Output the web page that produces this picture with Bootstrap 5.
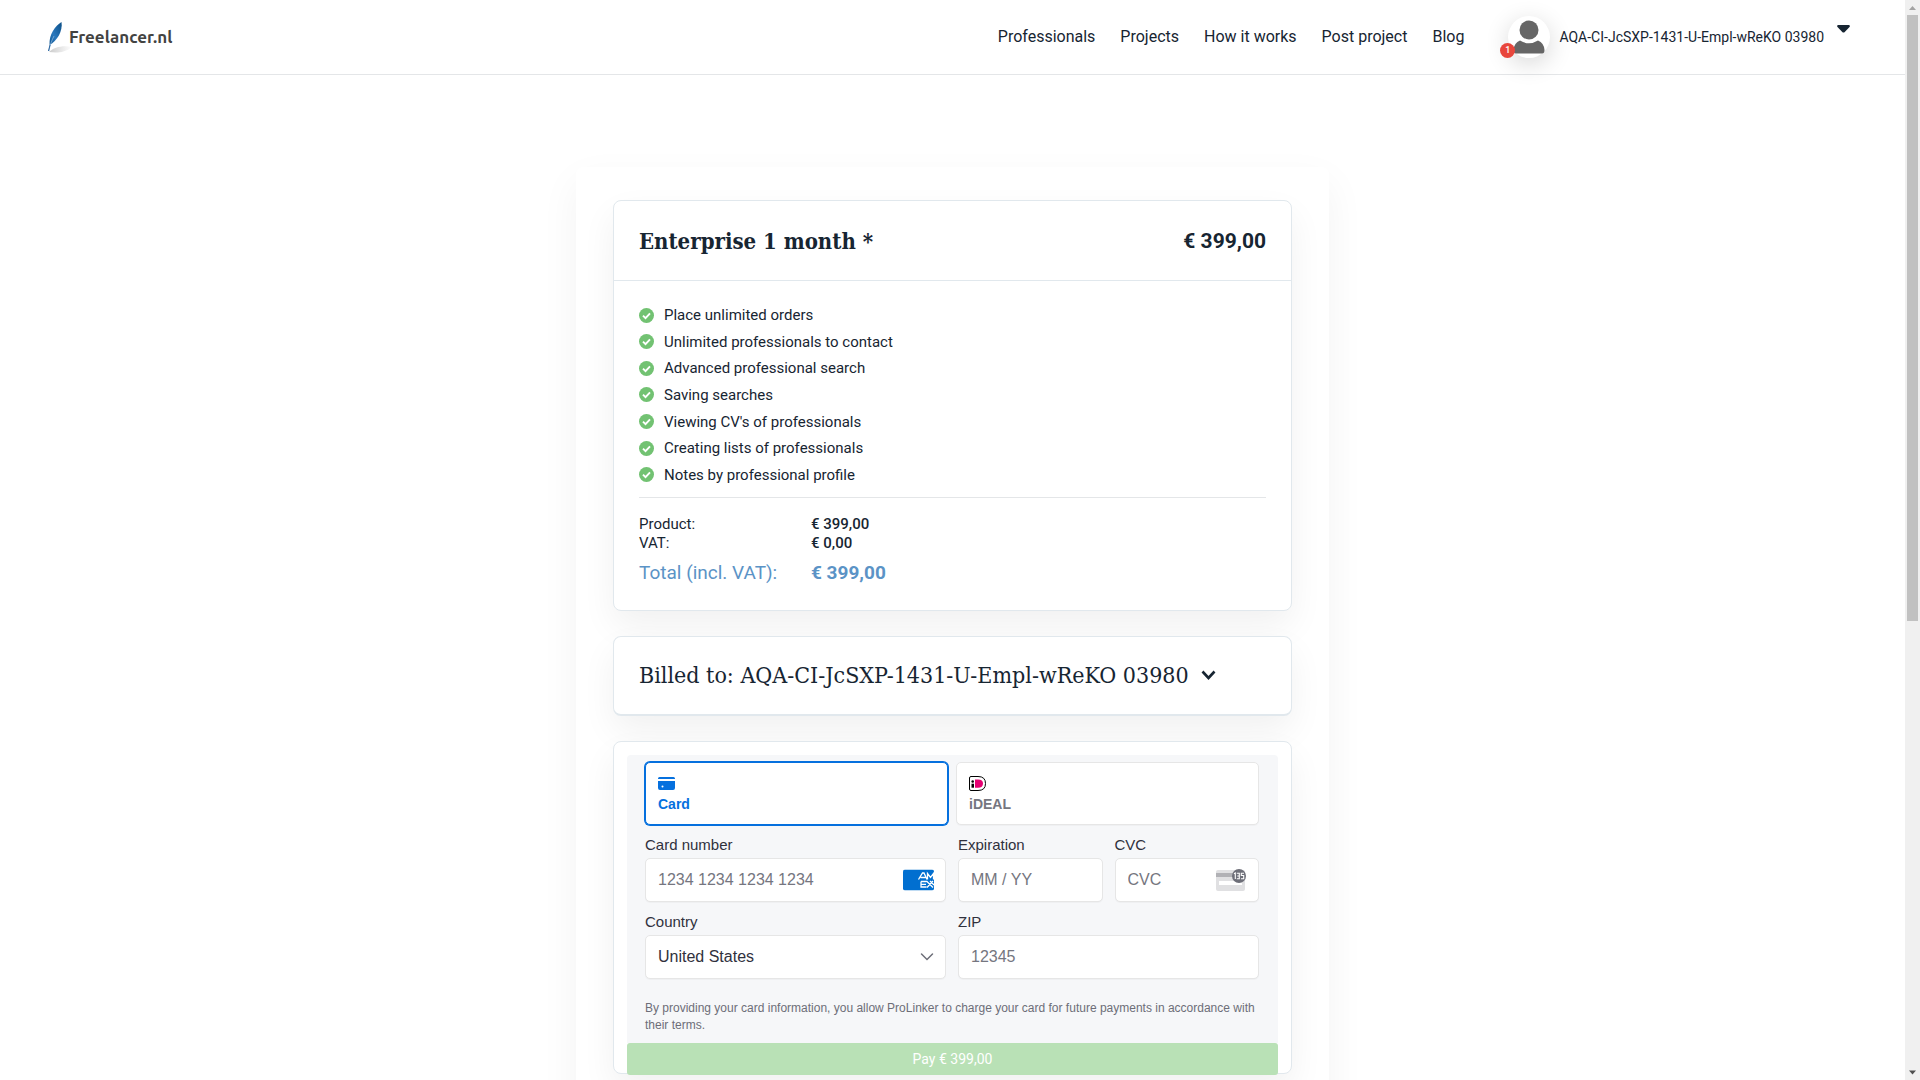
<!DOCTYPE html>
<html lang="en">
<head>
<meta charset="utf-8">
<meta name="viewport" content="width=device-width, initial-scale=1">
<title>Freelancer.nl</title>
<link href="https://cdn.jsdelivr.net/npm/bootstrap@5.3.0/dist/css/bootstrap.min.css" rel="stylesheet">
<style>
:root{--ink:#172532;--line:#e1e8ed;--muted-pay:#757680;--pay-blue:#0570de}
body{font-family:Roboto,"Liberation Sans",sans-serif;font-size:15px;color:var(--ink);background:#fff}
.site-head{height:75px;padding:0 48px;border-bottom:1px solid #e4e6e8}
.brand-link{color:#434342;font:600 17px/24px Ubuntu,"Noto Sans",sans-serif;text-decoration:none;gap:6px}
.main-nav{gap:25px;margin-right:44px}
.main-nav .nav-link{color:var(--ink);font-size:16px;line-height:24px;padding:0}
.user-link{color:var(--ink);gap:9px;text-decoration:none;font-size:14px;line-height:20px}
.avatar{width:42px;height:42px;background:#fff;box-shadow:0 6px 24px rgba(0,0,0,.16)}
.count-dot{left:-8px;bottom:0;width:15px;height:15px;font-size:9px;font-weight:500;line-height:15px;background:#e8463c;color:#fff}
.user-caret{margin:0 7px 16px 4px}
.checkout{width:100%;max-width:753px;margin-top:92px;padding:33px 37px 80px;border-radius:8px;box-shadow:0 15px 40px rgba(0,0,0,.05)}
.box{background:#fff;border:1px solid var(--line);border-radius:8px;box-shadow:0 15px 35px rgba(0,0,0,.06);margin-bottom:25px}
.slab{font-family:"Roboto Slab","DejaVu Serif Condensed","DejaVu Serif",serif;margin:0}
.plan-head{height:80px;padding:0 25px;border-bottom:1px solid var(--line)}
.plan-head h1{font-size:22px;font-weight:700;line-height:32px}
.plan-price{font-size:21px;font-weight:700;line-height:32px}
.plan-body{padding:23px 25px 23px}
.perks{height:182px;margin:0}
.perks li{gap:10px;line-height:22px}
.totals{margin-top:11px;padding-top:17px;border-top:1px solid #e4e6e8;line-height:19px}
.totals dt,.totals dd{margin:0}
.totals dt{width:172px;font-weight:400}
.totals dd{font-weight:500}
.totals .sum{font-size:19px;line-height:28px;color:#5b93c6;margin-top:6px}
.totals .sum dd{font-weight:700}
.billed{height:80px;padding:0 25px 2px;border-bottom-width:2px;gap:12px;width:100%;color:var(--ink);text-align:left}
.billed h2{font-size:23px;line-height:32px;font-weight:400}
.pay-box{padding:13px 13px 0;height:333px}
.pay-panel{background:#f6f7f9;border-radius:4px 4px 0 0;padding:7px 19px 0 18px;height:288px;font-family:"Liberation Sans",sans-serif;color:#30313d}
.tiles{gap:8px;margin-bottom:10px}
.method{flex:1 1 0;height:63px;padding:12px 12px 0;background:#fff;border:1px solid #e6e6e6;border-radius:5px;box-shadow:0 1px 1px rgba(0,0,0,.03);font-size:14px;font-weight:700;line-height:20px;color:var(--muted-pay)}
.method.chosen{color:var(--pay-blue);border-color:var(--pay-blue);box-shadow:0 0 0 1px var(--pay-blue)}
.method svg{margin-bottom:2px}
.fields{display:grid;grid-template-columns:repeat(4,minmax(0,1fr));column-gap:12px;row-gap:10px}
.wide{grid-column:span 2}
.fields label{display:block;font-size:15px;line-height:20px;margin-bottom:3px}
.fields .form-control,.fields .form-select{height:44px;padding:0 12px;border:1px solid #e6e6e6;border-radius:5px;font-size:16px;color:#30313d;box-shadow:0 1px 1px rgba(0,0,0,.03)}
.fields .form-select{background-image:none}
.fields .form-control::placeholder{color:var(--muted-pay);opacity:1}
.in-icon{position:absolute;right:12px;top:50%;transform:translateY(-50%);pointer-events:none}
.terms{font-size:12px;line-height:17px;color:#6d6e78;margin:21px 0 0}
.pay-btn{width:100%;height:32px;padding:0;border:0;border-radius:3px;background:#b9e1b6;color:#fff;font-size:14px;line-height:32px}
.pay-btn:disabled{background:#b9e1b6;color:#fff;opacity:1}
.scroll-rail{width:15px;background:#f0f0f0}
.scroll-thumb{width:11px;height:606px;background:#c1c1c1}
</style>
<script src="https://cdn.jsdelivr.net/npm/bootstrap@5.3.0/dist/js/bootstrap.bundle.min.js"></script>
</head>
<body>
<svg width="0" height="0" class="position-absolute" aria-hidden="true">
  <symbol id="tick" viewBox="0 0 15 15"><circle cx="7.500" cy="7.500" r="7.500" fill="#72c272"/><path d="M4 7.700l2.500 2.500L11 5.400" fill="none" stroke="#fff" stroke-width="1.900"/></symbol>
</svg>
<div class="d-flex vh-100 overflow-hidden">
  <div class="flex-grow-1 overflow-hidden">
    <header class="site-head d-flex align-items-center justify-content-between">
      <a class="brand-link d-flex align-items-center" href="#">
        <svg width="15" height="31" viewBox="0 0 15 31" overflow="visible" aria-hidden="true">
          <defs><linearGradient id="quill" x1="1" y1="0" x2="0" y2="1"><stop offset="0" stop-color="#0b4e86"/><stop offset=".6" stop-color="#2a78bd"/><stop offset="1" stop-color="#0f5691"/></linearGradient>
          <linearGradient id="shade"><stop offset="0" stop-color="#ccc"/><stop offset="1" stop-color="#fff"/></linearGradient></defs>
          <path d="M1 30C6 25 15 23 24 25C17 31 8 31 1 30Z" fill="url(#shade)"/>
          <path d="M13.500 0C7 4 1 12 1.500 23C9 19 15 9 13.500 0Z" fill="url(#quill)"/>
          <path d="M6 14C4 18 2 23 .8 29" fill="none" stroke="#86b3da" stroke-width=".8"/>
          <path d="M2 23L.5 29" stroke="#27619b"/>
        </svg>
        <span>Freelancer.nl</span>
      </a>
      <div class="d-flex align-items-center">
        <nav class="main-nav nav flex-nowrap">
          <a class="nav-link" href="#">Professionals</a>
          <a class="nav-link" href="#">Projects</a>
          <a class="nav-link" href="#">How it works</a>
          <a class="nav-link" href="#">Post project</a>
          <a class="nav-link" href="#">Blog</a>
        </nav>
        <a class="user-link d-flex align-items-center" href="#">
          <span class="avatar rounded-circle position-relative">
            <svg class="d-block" width="42" height="42" viewBox="0 0 42 42" aria-hidden="true"><circle cx="21" cy="14" r="9.500" fill="#666"/><path d="M12 24.500Q21 30 30 24.500Q36 27 36.500 34Q36.500 37.500 34 37.500H8Q5.500 37.500 5.500 34Q6 27 12 24.500Z" fill="#666"/></svg>
            <span class="count-dot rounded-circle position-absolute text-center">1</span>
          </span>
          <span>AQA-CI-JcSXP-1431-U-Empl-wReKO 03980</span>
          <svg class="user-caret" width="13" height="8" viewBox="0 0 13 8" aria-hidden="true"><path d="M1 0H12Q13.500 .5 12.500 2L7.500 7.200Q6.500 8 5.500 7.200L.5 2Q-.5 .5 1 0Z" fill="#172532"/></svg>
        </a>
      </div>
    </header>

    <main class="checkout mx-auto">
      <section class="box">
        <div class="plan-head d-flex align-items-center justify-content-between">
          <h1 class="slab">Enterprise 1 month *</h1>
          <div class="plan-price">€ 399,00</div>
        </div>
        <div class="plan-body">
          <ul class="perks list-unstyled d-flex flex-column justify-content-between">
            <li class="d-flex align-items-center"><svg width="15" height="15"><use href="#tick"/></svg>Place unlimited orders</li>
            <li class="d-flex align-items-center"><svg width="15" height="15"><use href="#tick"/></svg>Unlimited professionals to contact</li>
            <li class="d-flex align-items-center"><svg width="15" height="15"><use href="#tick"/></svg>Advanced professional search</li>
            <li class="d-flex align-items-center"><svg width="15" height="15"><use href="#tick"/></svg>Saving searches</li>
            <li class="d-flex align-items-center"><svg width="15" height="15"><use href="#tick"/></svg>Viewing CV's of professionals</li>
            <li class="d-flex align-items-center"><svg width="15" height="15"><use href="#tick"/></svg>Creating lists of professionals</li>
            <li class="d-flex align-items-center"><svg width="15" height="15"><use href="#tick"/></svg>Notes by professional profile</li>
          </ul>
          <dl class="totals mb-0">
            <div class="d-flex"><dt>Product:</dt><dd>€ 399,00</dd></div>
            <div class="d-flex"><dt>VAT:</dt><dd>€ 0,00</dd></div>
            <div class="d-flex sum"><dt>Total (incl. VAT):</dt><dd>€ 399,00</dd></div>
          </dl>
        </div>
      </section>

      <button class="box billed d-flex align-items-center" type="button">
        <h2 class="slab">Billed to: AQA-CI-JcSXP-1431-U-Empl-wReKO 03980</h2>
        <svg width="15" height="10" viewBox="0 0 15 10" aria-hidden="true"><path d="M1.500 1.500L7.500 8L13.500 1.500" fill="none" stroke="#172532" stroke-width="2.600"/></svg>
      </button>

      <form class="box pay-box">
        <div class="pay-panel">
          <div class="tiles d-flex">
            <button class="method chosen d-flex flex-column align-items-start justify-content-start" type="button">
              <svg width="17" height="17" viewBox="0 0 17 17" aria-hidden="true"><path d="M0 4V3.500Q0 2 1.500 2H15.500Q17 2 17 3.500V4ZM0 6H17V13Q17 15 15 15H2Q0 15 0 13ZM4.500 10.500a1 1 0 0 0 0 2a1 1 0 0 0 0-2Z" fill="#0570de" fill-rule="evenodd"/></svg>
              Card
            </button>
            <button class="method d-flex flex-column align-items-start justify-content-start" type="button">
              <svg width="17" height="17" viewBox="0 0 17 17" aria-hidden="true"><path d="M2 1.500H9Q16.500 1.500 16.500 8.500Q16.500 15.500 9 15.500H2Q.5 15.500 .5 14V3Q.5 1.500 2 1.500Z" fill="#fff" stroke="#000"/><path d="M6 4.500H9Q14 4.500 14 8.500Q14 12.700 9 12.700H6Z" fill="#e50072"/><circle cx="3.700" cy="6.500" r="1.300"/><path d="M2.500 8.700H5V12.700H2.500Z"/></svg>
              iDEAL
            </button>
          </div>
          <div class="fields">
            <div class="wide"><label for="num">Card number</label>
              <div class="position-relative"><input id="num" class="form-control" type="text" placeholder="1234 1234 1234 1234">
                <svg class="in-icon" width="31" height="21" viewBox="0 0 31 21" aria-hidden="true"><rect width="31" height="21" rx="2" fill="#016fd0"/><g fill="none" stroke="#fff" stroke-width="1.300"><path d="M15.500 10L19.500 3.500H21L24 10M17.500 8H22.500M24.500 10V4L27.500 8L30.500 4V10M18 12V17.500H23.500M18 12H23.500M18 14.800H23M23.500 11.500L30 18M30 11.500L24 18M27 11.500L31 15.500"/></g></svg></div></div>
            <div><label for="exp">Expiration</label><input id="exp" class="form-control" type="text" placeholder="MM / YY"></div>
            <div><label for="cvc">CVC</label>
              <div class="position-relative"><input id="cvc" class="form-control" type="text" placeholder="CVC">
                <svg class="in-icon" width="31" height="22" viewBox="0 0 31 22" aria-hidden="true"><rect y="1" width="29" height="21" rx="2" fill="#e0e0e2"/><path d="M0 4H29V8H0Z" fill="#b1b1b5"/><rect x="3" y="12" width="23" height="4" fill="#fff"/><circle cx="23" cy="7" r="7" fill="#6d6e78"/><path d="M18 4.800L19.300 4V10M20.800 4.300H23.300V9.700H20.800M21.300 7H23.300M28 4.300H25.300V6.500H27.700V9.700H25" fill="none" stroke="#fff" stroke-width="1.100"/></svg></div></div>
            <div class="wide"><label for="country">Country</label>
              <div class="position-relative"><select id="country" class="form-select"><option>United States</option></select>
                <svg class="in-icon" width="14" height="9" viewBox="0 0 14 9" aria-hidden="true"><path d="M1.500 1.500L7 7L12.500 1.500" fill="none" stroke="#6d6e78" stroke-width="1.500" stroke-linecap="round"/></svg></div></div>
            <div class="wide"><label for="zip">ZIP</label><input id="zip" class="form-control" type="text" placeholder="12345"></div>
          </div>
          <p class="terms">By providing your card information, you allow ProLinker to charge your card for future payments in accordance with their terms.</p>
        </div>
        <button class="pay-btn d-block" type="submit" disabled>Pay € 399,00</button>
      </form>
    </main>
  </div>
  <div class="scroll-rail flex-shrink-0 d-flex flex-column align-items-center justify-content-between" aria-hidden="true">
    <div class="d-flex flex-column align-items-center">
      <svg width="15" height="15" viewBox="0 0 15 15"><path d="M4 10L7.500 6L11 10Z" fill="#a3a3a3"/></svg>
      <div class="scroll-thumb"></div>
    </div>
    <svg width="15" height="15" viewBox="0 0 15 15"><path d="M4 5.500H11L7.500 9.500Z" fill="#505050"/></svg>
  </div>
</div>
</body>
</html>
